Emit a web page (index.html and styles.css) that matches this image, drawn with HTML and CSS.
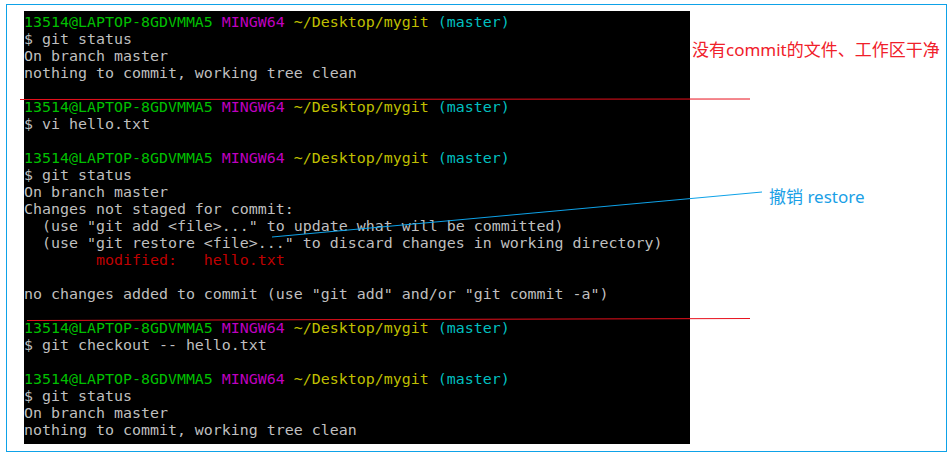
FILE: index.html
```html
<!DOCTYPE html>
<html>
<head>
<meta charset="utf-8">
<link rel="stylesheet" href="styles.css">
</head>
<body>
<div class="frame">
  <pre class="term"><span class="g">13514@LAPTOP-8GDVMMA5</span> <span class="m">MINGW64</span> <span class="y">~/Desktop/mygit</span> <span class="c">(master)</span>
$ git status
On branch master
nothing to commit, working tree clean

<span class="g">13514@LAPTOP-8GDVMMA5</span> <span class="m">MINGW64</span> <span class="y">~/Desktop/mygit</span> <span class="c">(master)</span>
$ vi hello.txt

<span class="g">13514@LAPTOP-8GDVMMA5</span> <span class="m">MINGW64</span> <span class="y">~/Desktop/mygit</span> <span class="c">(master)</span>
$ git status
On branch master
Changes not staged for commit:
  (use "git add &lt;file&gt;..." to update what will be committed)
  (use "git restore &lt;file&gt;..." to discard changes in working directory)
        <span class="r">modified:   hello.txt</span>

no changes added to commit (use "git add" and/or "git commit -a")

<span class="g">13514@LAPTOP-8GDVMMA5</span> <span class="m">MINGW64</span> <span class="y">~/Desktop/mygit</span> <span class="c">(master)</span>
$ git checkout -- hello.txt

<span class="g">13514@LAPTOP-8GDVMMA5</span> <span class="m">MINGW64</span> <span class="y">~/Desktop/mygit</span> <span class="c">(master)</span>
$ git status
On branch master
nothing to commit, working tree clean</pre>
  <div class="notes">
    <div class="note note-red">没有commit的文件、工作区干净</div>
    <div class="note note-blue">撤销 restore</div>
  </div>
</div>
<svg class="marks" width="952" height="458" viewBox="0 0 952 458">
  <line x1="20" y1="99.5" x2="750" y2="99" stroke="#e8101c" stroke-width="1"/>
  <line x1="27" y1="320.5" x2="750" y2="318.5" stroke="#e8101c" stroke-width="1"/>
  <line x1="272" y1="237" x2="762" y2="192" stroke="#0ea2e8" stroke-width="1"/>
</svg>
</body>
</html>
```

FILE: styles.css
```css
html, body {
  margin: 0;
  padding: 0;
  background: #ffffff;
}
body {
  position: relative;
  width: 952px;
  height: 458px;
  overflow: hidden;
}
.frame {
  box-sizing: border-box;
  margin: 4px 0 0 6px;
  width: 941px;
  height: 448px;
  border: 1px solid #0ea2e8;
  padding: 6px 0 0 17px;
  display: flex;
  align-items: flex-start;
}
.term {
  margin: 0;
  box-sizing: border-box;
  width: 666px;
  height: 433px;
  background: #000000;
  color: #bfbfbf;
  font-family: "DejaVu Sans Mono", "Liberation Mono", monospace;
  font-size: 14.95px;
  line-height: 17px;
  padding: 3px 0 0 0;
  white-space: pre;
  overflow: hidden;
  flex: none;
}
.g { color: #00bf00; }
.m { color: #bf00bf; }
.y { color: #bfbf00; }
.c { color: #00bfbf; }
.r { color: #bf0000; }
.notes {
  display: flex;
  flex-direction: column;
  align-items: flex-start;
  margin-left: 2px;
}
.note {
  font-family: "Noto Sans", "Noto Sans CJK SC", sans-serif;
  font-size: 17px;
  line-height: 22px;
  white-space: nowrap;
}
.note-red {
  color: #f0202a;
  margin-top: 28px;
}
.note-blue {
  color: #1aa0e6;
  margin-top: 125px;
  margin-left: 77px;
}
.marks {
  position: absolute;
  top: 0;
  left: 0;
  pointer-events: none;
}
```
